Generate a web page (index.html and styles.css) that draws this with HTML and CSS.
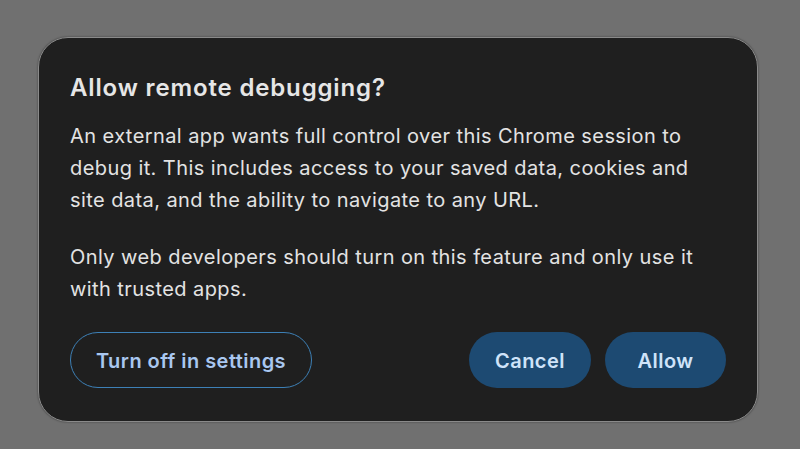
FILE: index.html
```html
<!DOCTYPE html>
<html>
<head>
<meta charset="utf-8">
<link rel="stylesheet" href="styles.css">
</head>
<body>
<div class="dialog">
  <h1 class="title">Allow remote debugging?</h1>
  <p class="text">An external app wants full control over this Chrome session to debug it. This includes access to your saved data, cookies and site data, and the ability to navigate to any URL.</p>
  <p class="text last">Only web developers should turn on this feature and only use it with trusted apps.</p>
  <div class="actions">
    <button class="btn outline">Turn off in settings</button>
    <div class="right">
      <button class="btn filled cancel">Cancel</button>
      <button class="btn filled allow">Allow</button>
    </div>
  </div>
</div>
</body>
</html>
```
FILE: styles.css
```css
html, body {
  margin: 0;
  padding: 0;
  width: 800px;
  height: 449px;
  background: #707070;
  overflow: hidden;
}
body {
  padding: 37px 0 0 38px;
  box-sizing: border-box;
  font-family: Inter, "Noto Sans", sans-serif;
}
.dialog {
  width: 720px;
  height: 385px;
  box-sizing: border-box;
  background: #1f1f1f;
  border: 1px solid #8a8a8a;
  border-radius: 30px;
  padding: 35px 31px 0 31px;
  box-shadow: 0 0 2px rgba(0,0,0,0.5);
}
.title {
  margin: 0 0 17px 0;
  font-size: 24px;
  font-weight: 600;
  letter-spacing: 0.85px;
  color: #e6e6e6;
  line-height: 30px;
}
.text {
  margin: 0 0 25px 0;
  font-size: 20px;
  line-height: 32px;
  letter-spacing: 0.42px;
  color: #e3e3e3;
  font-weight: 400;
}
.text.last {
  margin-bottom: 27px;
}
.actions {
  display: flex;
  justify-content: space-between;
}
.right {
  display: flex;
  gap: 14px;
}
.btn {
  height: 56px;
  border-radius: 28px;
  font-family: Inter, "Noto Sans", sans-serif;
  font-size: 20px;
  font-weight: 600;
  letter-spacing: 0.45px;
  padding: 2px 0 0 0;
  cursor: pointer;
}
.outline {
  width: 242px;
  background: transparent;
  border: 1.5px solid #3d80b6;
  color: #a9c7f0;
}
.filled {
  background: #1d4a72;
  border: none;
  color: #cfe3f9;
}
.cancel {
  width: 122px;
}
.allow {
  width: 121px;
}
```
